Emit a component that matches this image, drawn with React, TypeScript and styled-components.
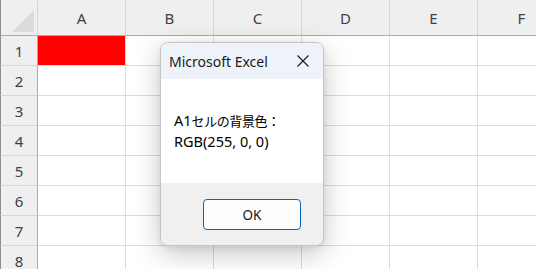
import styled, { createGlobalStyle } from 'styled-components'

const GlobalStyle = createGlobalStyle`
  html, body {
    margin: 0;
    padding: 0;
    background: #ffffff;
    overflow: hidden;
  }
  body {
    font-family: 'Noto Sans', 'Noto Sans CJK JP', sans-serif;
  }
`

const Screen = styled.div`
  position: relative;
  width: 536px;
  height: 269px;
  overflow: hidden;
  background: #ffffff;
`

const Sheet = styled.div`
  display: grid;
  grid-template-columns: 38px repeat(6, 88px);
  grid-template-rows: 36px repeat(8, 30px);
`

const Corner = styled.div`
  position: relative;
  background: #efefef;
  border-left: 1px solid #8e8e8e;
  border-right: 1px solid #d6d6d6;
  border-bottom: 1px solid #ababab;
  box-sizing: border-box;

  &::after {
    content: '';
    position: absolute;
    right: 3px;
    bottom: 3px;
    width: 0;
    height: 0;
    border-style: solid;
    border-width: 0 0 22px 22px;
    border-color: transparent transparent #dcdcdc transparent;
  }
`

const ColHead = styled.div`
  background: #efefef;
  border-right: 1px solid #d6d6d6;
  border-bottom: 1px solid #ababab;
  box-sizing: border-box;
  display: flex;
  align-items: center;
  justify-content: center;
  font-size: 15px;
  color: #3f3f46;
  padding-top: 1px;
`

const RowHead = styled.div`
  background: #efefef;
  border-left: 1px solid #8e8e8e;
  border-right: 1px solid #ababab;
  border-bottom: 1px solid #d6d6d6;
  box-sizing: border-box;
  display: flex;
  align-items: center;
  justify-content: center;
  font-size: 15px;
  color: #3f3f46;
`

const Cell = styled.div<{ $fill?: string }>`
  background: ${p => p.$fill ?? '#ffffff'};
  border-right: 1px solid #dcdcdc;
  border-bottom: 1px solid #dcdcdc;
  box-sizing: border-box;
`

const Dialog = styled.div`
  position: absolute;
  left: 160px;
  top: 42px;
  width: 164px;
  height: 204px;
  box-sizing: border-box;
  border: 1px solid #c4c4c4;
  border-radius: 8px;
  overflow: hidden;
  display: flex;
  flex-direction: column;
  background: #ffffff;
  box-shadow: 0 8px 28px rgba(0, 0, 0, 0.22), 0 2px 6px rgba(0, 0, 0, 0.08);
`

const TitleBar = styled.div`
  height: 36px;
  flex: none;
  background: #eef3f9;
  display: flex;
  align-items: center;
  justify-content: space-between;
  padding: 0 14px 0 8px;
`

const Title = styled.span`
  font-size: 14px;
  color: #1a1a1a;
`

const Close = styled.svg`
  width: 12px;
  height: 12px;
  display: block;
`

const Body = styled.div`
  flex: 1;
  padding: 31px 13px 0;
  font-family: 'Noto Sans', 'Noto Sans CJK JP', sans-serif;
  font-size: 14.5px;
  line-height: 20px;
  color: #000000;
`

const Jp = styled.span`
  font-family: 'Noto Sans CJK JP', sans-serif;
  font-size: 13px;
  letter-spacing: -0.4px;
`

const Footer = styled.div`
  height: 62px;
  flex: none;
  background: #f0f0f0;
  display: flex;
  justify-content: flex-end;
  align-items: flex-start;
  padding: 16px 22px 0 0;
  box-sizing: border-box;
`

const OkButton = styled.button`
  width: 98px;
  height: 31px;
  box-sizing: border-box;
  border: 1px solid #0067c0;
  border-radius: 4px;
  background: #fdfdfd;
  font-family: 'Noto Sans', sans-serif;
  font-size: 13.5px;
  color: #1a1a1a;
  padding: 0;
`

const cols = ['A', 'B', 'C', 'D', 'E', 'F']
const rows = [1, 2, 3, 4, 5, 6, 7, 8]

export default function App() {
  return (
    <Screen>
      <GlobalStyle />
      <Sheet>
        <Corner />
        {cols.map(c => (
          <ColHead key={c}>{c}</ColHead>
        ))}
        {rows.map(r => [
          <RowHead key={`h${r}`}>{r}</RowHead>,
          ...cols.map(c => (
            <Cell key={`${c}${r}`} $fill={c === 'A' && r === 1 ? '#ff0000' : undefined} />
          )),
        ])}
      </Sheet>
      <Dialog>
        <TitleBar>
          <Title>Microsoft Excel</Title>
          <Close viewBox="0 0 12 12">
            <path d="M0.5 0.5 L11.5 11.5 M11.5 0.5 L0.5 11.5" stroke="#1a1a1a" strokeWidth="1.1" fill="none" />
          </Close>
        </TitleBar>
        <Body>
          A1<Jp>セルの背景色：</Jp>
          <br />
          RGB(255, 0, 0)
        </Body>
        <Footer>
          <OkButton>OK</OkButton>
        </Footer>
      </Dialog>
    </Screen>
  )
}
